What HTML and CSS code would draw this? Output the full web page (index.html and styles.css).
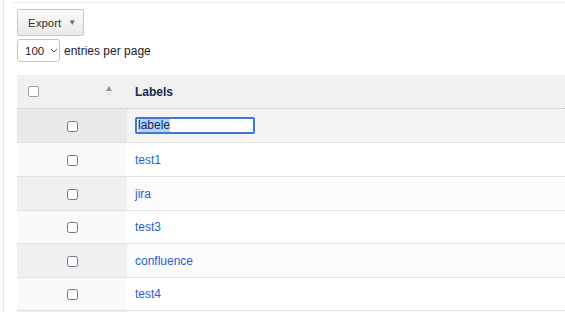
FILE: index.html
```html
<!DOCTYPE html>
<html>
<head>
<meta charset="utf-8">
<link rel="stylesheet" href="styles.css">
</head>
<body>
<div class="frame">
  <div class="topline"></div>
  <div class="content">
    <button class="export">Export <span class="caret">&#9660;</span></button>
    <div class="length">
      <div class="select"><span>100</span>
        <svg class="chev" width="8" height="5" viewBox="0 0 8 5"><path d="M1 1l3 3 3-3" fill="none" stroke="#555" stroke-width="1"/></svg>
      </div>
      <span class="len-label">entries per page</span>
    </div>
    <table class="grid">
      <thead>
        <tr>
          <th class="c1">
            <div class="head-c1">
              <span class="cb cb-head"></span>
              <svg class="sort" width="6" height="11" viewBox="0 0 6 11"><path d="M3 0L6 5H0z" fill="#8a92a3"/><path d="M3 11L0 6h6z" fill="#e2e4e8"/></svg>
            </div>
          </th>
          <th class="c2">Labels</th>
        </tr>
      </thead>
      <tbody>
        <tr class="odd editing">
          <td class="c1"><span class="cb"></span></td>
          <td class="c2"><div class="edit"><span class="sel">labele</span></div></td>
        </tr>
        <tr class="even"><td class="c1"><span class="cb"></span></td><td class="c2"><a href="#">test1</a></td></tr>
        <tr class="odd"><td class="c1"><span class="cb"></span></td><td class="c2"><a href="#">jira</a></td></tr>
        <tr class="even short"><td class="c1"><span class="cb"></span></td><td class="c2"><a href="#">test3</a></td></tr>
        <tr class="odd"><td class="c1"><span class="cb"></span></td><td class="c2"><a href="#">confluence</a></td></tr>
        <tr class="even short"><td class="c1"><span class="cb"></span></td><td class="c2"><a href="#">test4</a></td></tr>
        <tr class="odd"><td class="c1"></td><td class="c2"></td></tr>
      </tbody>
    </table>
  </div>
</div>
</body>
</html>
```
FILE: styles.css
```css
html, body {
  margin: 0;
  padding: 0;
  background: #fff;
  overflow: hidden;
  width: 565px;
  height: 318px;
}
body {
  font-family: "Liberation Sans", Arial, sans-serif;
  color: #172b4d;
}
.frame {
  margin-left: 3px;
  border-left: 1px solid #e6e6e6;
  height: 312px;
  overflow: hidden;
}
.topline {
  margin: 2px 0 0 9px;
  border-top: 1px solid #ececec;
}
.content {
  padding: 6px 0 0 13px;
}
.export {
  display: flex;
  align-items: center;
  width: 67px;
  height: 27px;
  padding: 0 0 0 10px;
  border: 1px solid #c8c8c8;
  border-radius: 2px;
  background: linear-gradient(#fafafa, #e9e9e9);
  font-family: "Liberation Sans", Arial, sans-serif;
  font-size: 11.5px;
  color: #333;
}
.caret {
  font-size: 8px;
  color: #666;
  margin-left: 7px;
}
.length {
  display: flex;
  align-items: center;
  margin-top: 3px;
  height: 23px;
}
.select {
  box-sizing: border-box;
  display: flex;
  align-items: center;
  width: 43px;
  height: 23px;
  padding-left: 7px;
  border: 1px solid #c6c6c6;
  border-radius: 3px;
  font-size: 11.5px;
  color: #222;
}
.chev {
  margin-left: 6px;
}
.len-label {
  margin-left: 4px;
  font-size: 12px;
  color: #222;
}
.grid {
  margin-top: 13px;
  width: 560px;
  border-collapse: collapse;
  font-size: 12px;
}
.grid th {
  height: 33px;
  padding: 0;
  background: #f1f1f1;
  border-bottom: 1px dotted #c4c4c4;
  text-align: left;
  font-weight: bold;
  font-size: 12px;
  color: #172b4d;
}
.grid th.c2 {
  padding-left: 8px;
}
.head-c1 {
  display: flex;
  align-items: center;
  justify-content: space-between;
  padding: 0 15px 0 11px;
}
.c1 {
  width: 110px;
  text-align: center;
}
.grid td {
  height: 33px;
  padding: 0;
  border-bottom: 1px solid #e1e1e1;
  vertical-align: middle;
}
.grid tr.short td {
  height: 32px;
}
.grid td.c2 {
  padding-left: 8px;
}
.odd td.c1 { background: #f0f0f0; }
.odd td.c2 { background: #fbfbfb; }
.even td.c1 { background: #fafafa; }
.even td.c2 { background: #fff; }
.editing td.c1 { background: #e9e9e9; }
.editing td.c2 { background: #f4f4f4; }
.cb {
  display: inline-block;
  box-sizing: border-box;
  width: 11px;
  height: 11px;
  border: 1.5px solid #6b778c;
  border-radius: 2.5px;
  background: #fff;
  vertical-align: middle;
}
.cb-head {
  border: 1px solid #9aa0aa;
  border-radius: 2px;
}
.sort {
  display: block;
}
.grid a {
  color: #1f5fd0;
  text-decoration: none;
}
.edit {
  box-sizing: border-box;
  width: 120px;
  height: 17px;
  border: 2px solid #3b78d8;
  border-radius: 2px;
  background: #fff;
  display: flex;
  align-items: center;
  padding-left: 1px;
  font-size: 12px;
  color: #172b4d;
}
.sel {
  background: #b3d3f9;
  line-height: 13px;
}
```
